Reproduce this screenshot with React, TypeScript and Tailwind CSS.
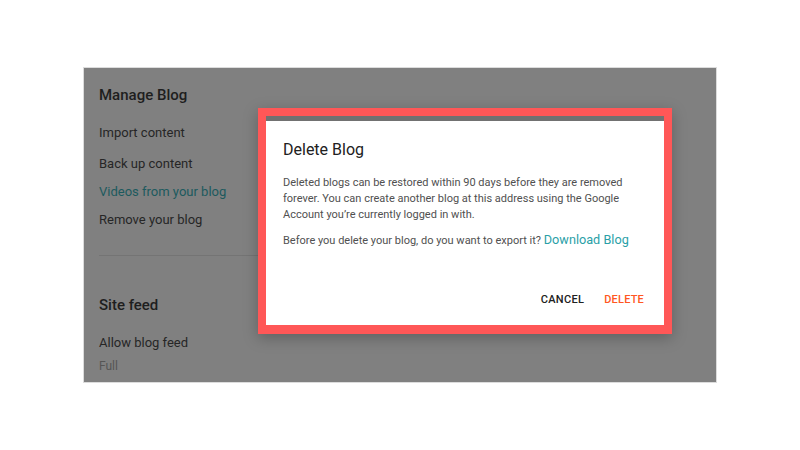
import React from "react";

export default function App() {
  return (
    <div
      className="w-[800px] h-[450px] bg-white pt-[67px] pl-[83px]"
      style={{ fontFamily: "Roboto, 'Noto Sans', sans-serif" }}
    >
      <div className="relative w-[634px] h-[316px] bg-[#808080] border border-[#dcdcdc]">
        <div className="flex flex-col pl-[15px] pr-[15px] pt-[17px]">
          <div className="text-[15px] leading-5 font-medium text-[#1e1e1e]">Manage Blog</div>
          <div className="mt-[18px] text-[13px] leading-5 text-[#262626]">Import content</div>
          <div className="mt-[11px] text-[13px] leading-5 text-[#262626]">Back up content</div>
          <div className="mt-[8px] text-[13px] leading-5 text-[#1c5a5e]">Videos from your blog</div>
          <div className="mt-[8px] text-[13px] leading-5 text-[#262626]">Remove your blog</div>
          <div className="mt-[25px] h-px w-[420px] bg-[#747474]" />
          <div className="mt-[39px] text-[15px] leading-5 font-medium text-[#1e1e1e]">Site feed</div>
          <div className="mt-[18px] text-[13px] leading-5 text-[#262626]">Allow blog feed</div>
          <div className="mt-[5px] text-[12px] leading-4 text-[#555555]">Full</div>
        </div>

        <div className="absolute left-[174px] top-[40px] w-[414px] h-[226px] border-[8px] border-b-[9px] border-[#ff5757] shadow-[0_4px_14px_rgba(0,0,0,0.25)]">
          <div className="h-full bg-white border-t-[5px] border-[#717171] flex flex-col pl-[17px] pr-[20px] pt-[19px] pb-[17px]">
            <div className="text-[16px] leading-5 text-[#212121]">Delete Blog</div>
            <p className="mt-[15px] text-[11px] leading-4 text-[#505050]">
              Deleted blogs can be restored within 90 days before they are removed forever. You can create another blog at this address using the Google Account you’re currently logged in with.
            </p>
            <p className="mt-[9px] text-[11px] leading-4 text-[#505050] whitespace-nowrap">
              Before you delete your blog, do you want to export it?{" "}
              <span className="text-[12.7px] text-[#2a9fa7]">Download Blog</span>
            </p>
            <div className="mt-auto flex justify-end gap-[20px]">
              <span className="text-[11px] leading-4 font-medium tracking-[0.3px] text-[#212121]">CANCEL</span>
              <span className="text-[11px] leading-4 font-medium tracking-[0.2px] text-[#ff5722]">DELETE</span>
            </div>
          </div>
        </div>
      </div>
    </div>
  );
}
